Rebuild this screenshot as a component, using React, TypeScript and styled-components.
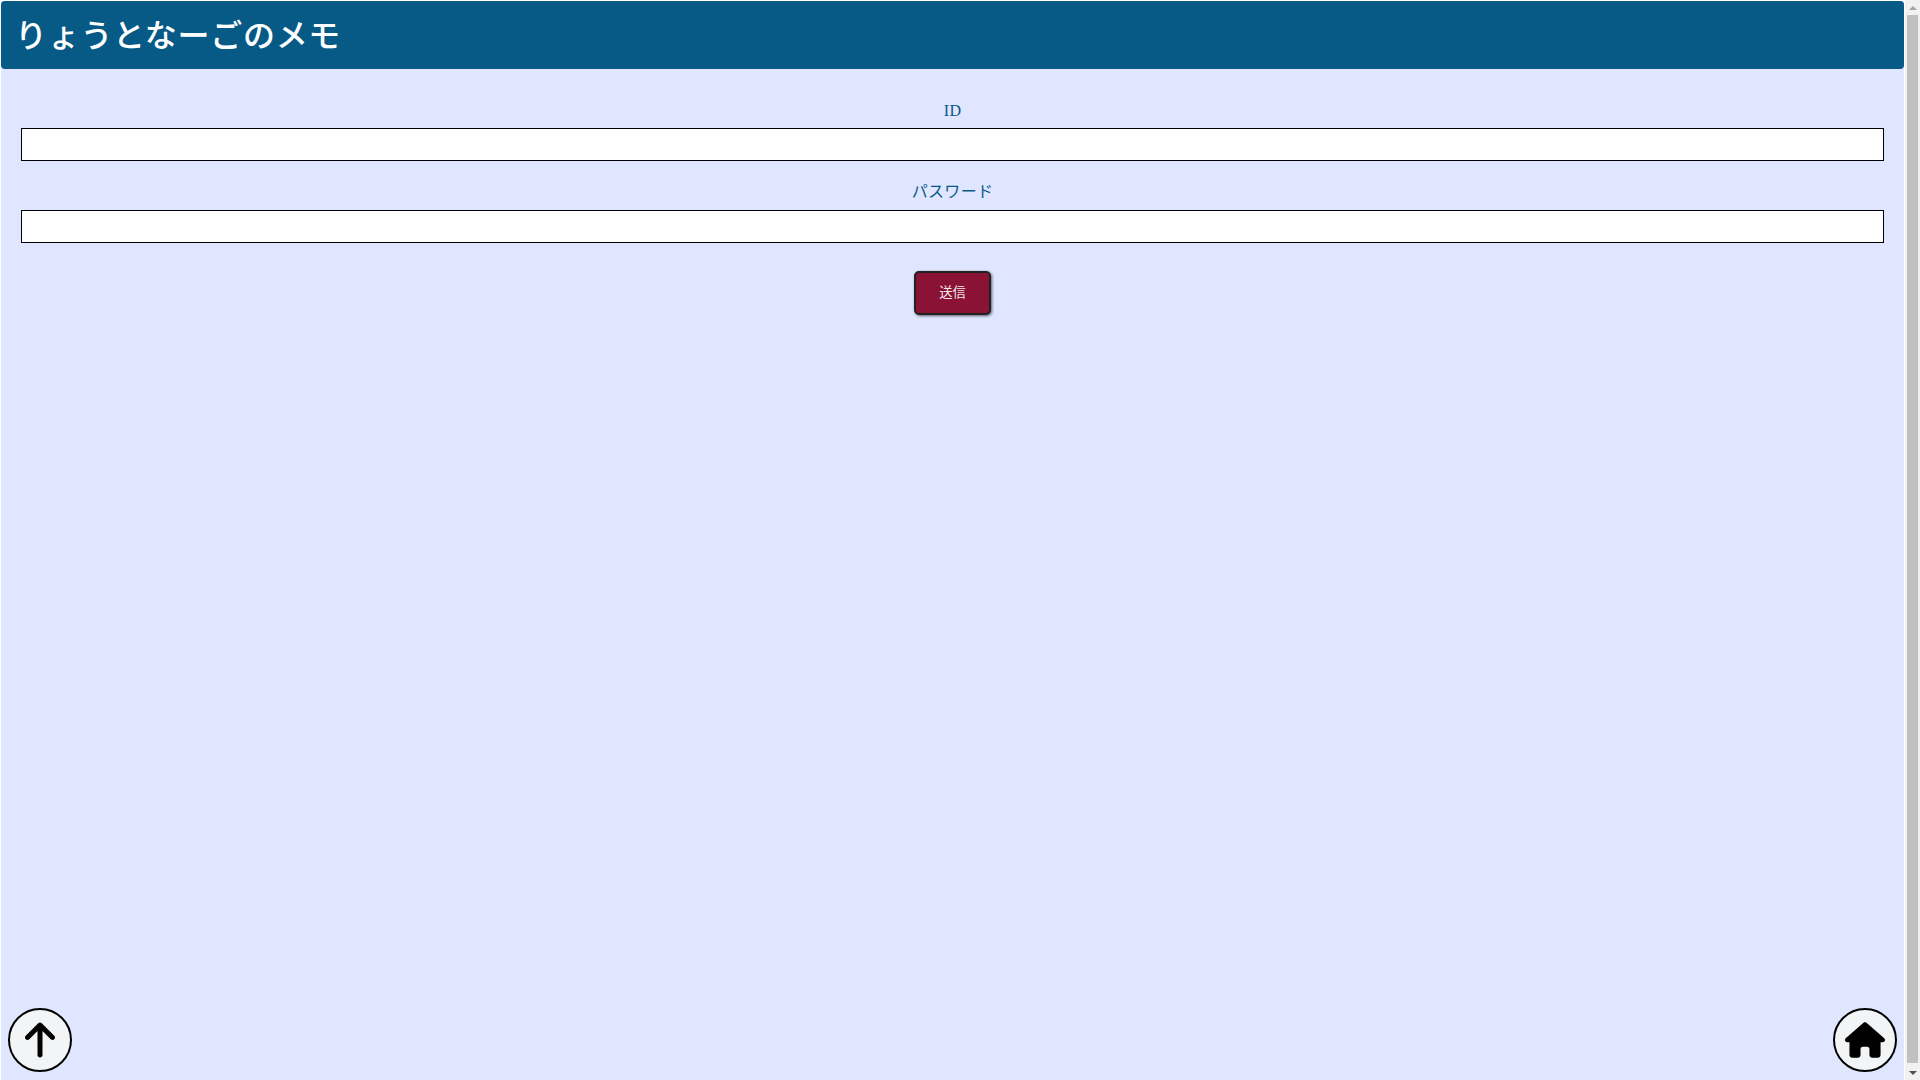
import React from "react";
import styled, { createGlobalStyle } from "styled-components";
import { FaArrowUp, FaHouse } from "react-icons/fa6";

const GlobalStyle = createGlobalStyle`
  html {
    overflow: hidden;
  }
  body {
    margin: 1px 16px 0 1px;
    font-family: "Liberation Serif", "Noto Sans CJK JP", serif;
  }
`;

const Page = styled.div`
  min-height: calc(100vh - 1px);
  background: #e0e6ff;
`;

const Header = styled.header`
  box-sizing: border-box;
  height: 68px;
  display: flex;
  align-items: center;
  padding: 0 14px 5px;
  background: #065a85;
  border-radius: 4px;
`;

const Title = styled.h1`
  margin: 0;
  font-size: 32px;
  font-weight: 500;
  letter-spacing: 0.7px;
  color: #fff;
`;

const Form = styled.form`
  display: flex;
  flex-direction: column;
  align-items: center;
  padding: 33px 20px 0;
`;

const Label = styled.label`
  display: block;
  margin-bottom: 8px;
  font-size: 16px;
  letter-spacing: 0.3px;
  color: #065a85;
`;

const Input = styled.input`
  display: block;
  box-sizing: border-box;
  width: 100%;
  height: 33px;
  margin-bottom: 17px;
  border: 1px solid #000;
  background: #fff;
`;

const Submit = styled.button`
  box-sizing: border-box;
  width: 77px;
  height: 44px;
  margin-top: 11px;
  padding: 0 0 3px;
  border: 2px solid #222;
  border-radius: 5px;
  background: #8a1235;
  color: #f4e6ea;
  font-family: inherit;
  font-size: 13.33px;
  box-shadow: 1px 1px 3px rgba(0, 0, 0, 0.6);
`;

const CircleButton = styled.a<{ $left?: boolean }>`
  position: fixed;
  bottom: 8px;
  ${(props) => (props.$left ? "left: 8px;" : "right: 23px;")}
  box-sizing: border-box;
  width: 64px;
  height: 64px;
  display: flex;
  align-items: center;
  justify-content: center;
  border: 2px solid #000;
  border-radius: 50%;
  background: #f3f4f6;
  color: #000;
  font-size: 40px;
`;

// the page scrollbar in the reference, headless chrome does not paint one
const Scrollbar = styled.div`
  position: fixed;
  top: 0;
  right: 0;
  bottom: 0;
  width: 15px;
  display: flex;
  flex-direction: column;
  background: #f1f1f1;
`;

const ScrollArrow = styled.div<{ $down?: boolean }>`
  flex: 0 0 15px;
  display: flex;
  align-items: center;
  justify-content: center;
  &::before {
    content: "";
    border-left: 4px solid transparent;
    border-right: 4px solid transparent;
    ${(props) =>
      props.$down
        ? "border-top: 4px solid #505050;"
        : "border-bottom: 4px solid #a3a3a3;"}
  }
`;

const ScrollTrack = styled.div`
  flex: 1;
  padding: 0 2px 2px;
  display: flex;
`;

const ScrollThumb = styled.div`
  flex: 1;
  background: #c1c1c1;
`;

export default function App() {
  return (
    <Page>
      <GlobalStyle />
      <Header>
        <Title>りょうとなーごのメモ</Title>
      </Header>
      <Form onSubmit={(e) => e.preventDefault()}>
        <Label htmlFor="id">ID</Label>
        <Input id="id" type="text" />
        <Label htmlFor="password">パスワード</Label>
        <Input id="password" type="password" />
        <Submit type="submit">送信</Submit>
      </Form>
      <CircleButton $left href="#top">
        <FaArrowUp />
      </CircleButton>
      <CircleButton href="#home">
        <FaHouse />
      </CircleButton>
      <Scrollbar>
        <ScrollArrow />
        <ScrollTrack>
          <ScrollThumb />
        </ScrollTrack>
        <ScrollArrow $down />
      </Scrollbar>
    </Page>
  );
}
